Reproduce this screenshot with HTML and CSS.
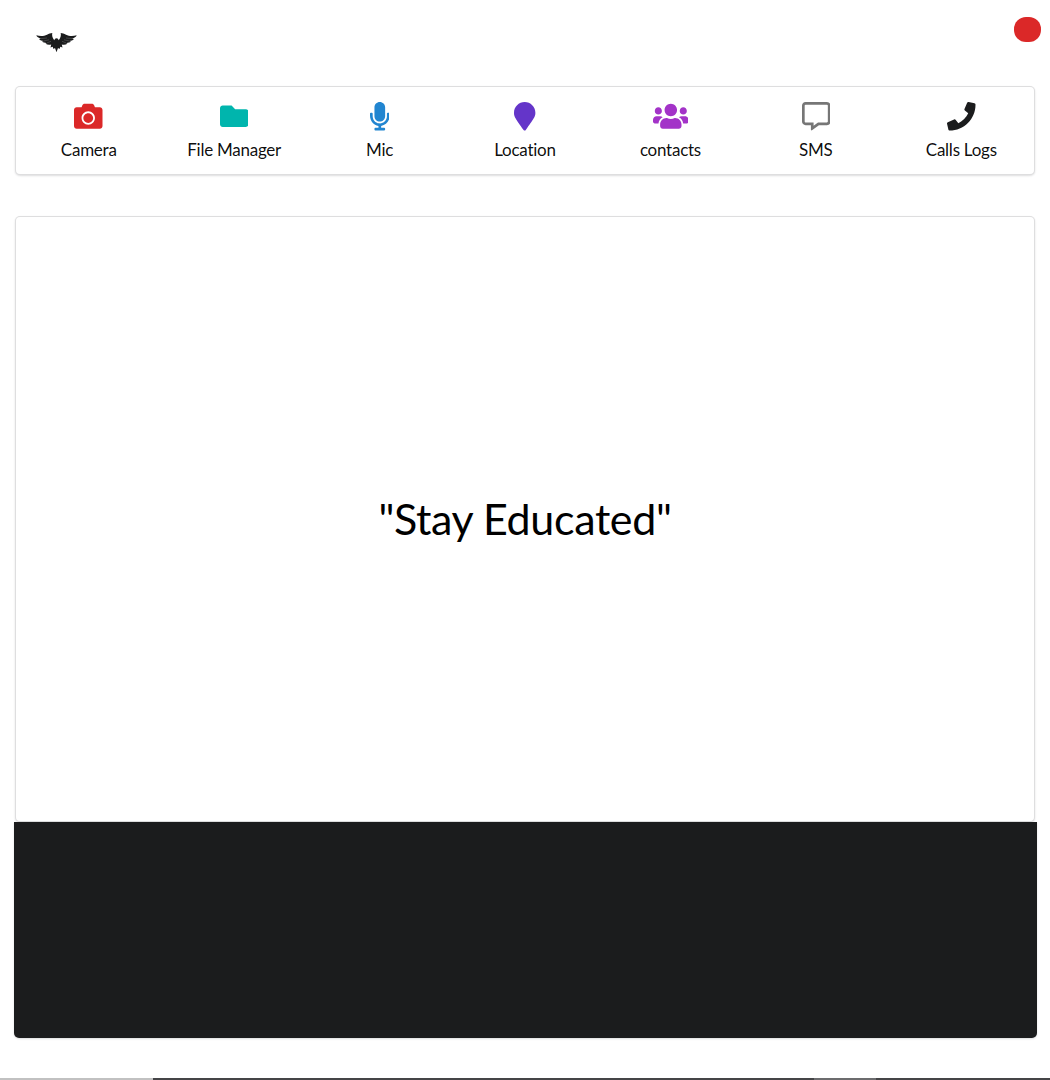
FILE: index.html
```html
<!DOCTYPE html>
<html lang="en">
<head>
<meta charset="utf-8">
<title>Dashboard</title>
<link rel="stylesheet" href="styles.css">
</head>
<body>
<div class="page">
  <header class="header">
    <svg class="logo" viewBox="0 0 41 22" fill="currentColor"><path d="M0.300 4.300C4 5.500 8 5.300 11 3.800C13 2.800 14.500 2.200 16.300 2C15.700 4.500 16.500 7 18.300 9.300L19 7.700L20.500 7.200L22 7.700L22.700 9.300C24.500 7 25.300 4.500 24.700 2C26.500 2.200 28 2.800 30 3.800C33 5.300 37 5.500 40.700 4.300C40 6 38.500 7 36 7.600L38 7.900C37 9.200 35.500 9.800 33 9.900L35 10.500C33.500 11.700 31.800 12 30 11.900L31.500 12.800C29.500 14 27.500 14 25.800 13.500L26.500 16.500L24.300 15.700L23.500 18L22 17L20.500 21.300L19 17L17.500 18L16.700 15.700L14.500 16.500L15.200 13.500C13.500 14 11.500 14 9.500 12.800L11 11.900C9.200 12 7.500 11.700 6 10.500L8 9.900C5.500 9.800 4 9.200 3 7.900L5 7.600C2.500 7 1 6 0.300 4.300Z"/><path class="feathers" d="M5 7.600L11 7M8 9.900L13 8.800M11 11.900L15 10.300M36 7.600L30 7M33 9.900L28 8.800M30 11.900L26 10.300"/></svg>
    <span class="status"></span>
  </header>

  <nav class="segment menu">
    <a class="item"><svg class="icon red" viewBox="0 0 512 512"><path d="M512 144v288c0 26.500-21.500 48-48 48H48c-26.500 0-48-21.500-48-48V144c0-26.500 21.500-48 48-48h88l12.300-32.900c7-18.700 24.900-31.100 44.900-31.100h125.500c20 0 37.900 12.400 44.900 31.100L376 96h88c26.500 0 48 21.500 48 48zM376 288c0-66.200-53.800-120-120-120s-120 53.800-120 120 53.800 120 120 120 120-53.800 120-120zm-32 0c0 48.500-39.500 88-88 88s-88-39.500-88-88 39.500-88 88-88 88 39.500 88 88z"/></svg><span>Camera</span></a>
    <a class="item"><svg class="icon teal" viewBox="0 0 512 512"><path d="M464 128H272l-64-64H48C21.490 64 0 85.490 0 112v288c0 26.510 21.490 48 48 48h416c26.510 0 48-21.490 48-48V176c0-26.510-21.490-48-48-48z"/></svg><span>File Manager</span></a>
    <a class="item"><svg class="icon blue" viewBox="0 0 352 512"><path d="M176 352c53.020 0 96-42.980 96-96V96c0-53.020-42.980-96-96-96S80 42.980 80 96v160c0 53.020 42.980 96 96 96zm160-160h-16c-8.840 0-16 7.160-16 16v48c0 74.800-64.490 134.820-140.790 127.380C96.710 376.890 48 317.110 48 250.300V208c0-8.840-7.160-16-16-16H16c-8.840 0-16 7.160-16 16v40.160c0 89.640 63.970 169.550 152 181.690V464H96c-8.840 0-16 7.160-16 16v16c0 8.840 7.160 16 16 16h160c8.840 0 16-7.160 16-16v-16c0-8.840-7.160-16-16-16h-56v-33.770C285.710 418.470 352 344.900 352 256v-48c0-8.840-7.160-16-16-16z"/></svg><span>Mic</span></a>
    <a class="item"><svg class="icon violet" viewBox="0 0 384 512"><path d="M172.268 501.670C26.970 291.031 0 269.413 0 192 0 85.961 85.961 0 192 0s192 85.961 192 192c0 77.413-26.970 99.031-172.268 309.670-9.535 13.774-29.930 13.773-39.464 0z"/></svg><span>Location</span></a>
    <a class="item"><svg class="icon purple" viewBox="0 0 640 512"><path d="M96 224c35.300 0 64-28.700 64-64s-28.700-64-64-64-64 28.700-64 64 28.700 64 64 64zm448 0c35.300 0 64-28.700 64-64s-28.700-64-64-64-64 28.700-64 64 28.700 64 64 64zm32 32h-64c-17.600 0-33.500 7.100-45.100 18.600 40.300 22.100 68.900 62 75.100 109.400h66c17.700 0 32-14.300 32-32v-32c0-35.300-28.700-64-64-64zm-256 0c61.900 0 112-50.100 112-112S381.900 32 320 32 208 82.100 208 144s50.100 112 112 112zm76.800 32h-8.300c-20.800 10-43.900 16-68.500 16s-47.600-6-68.500-16h-8.300C179.600 288 128 339.600 128 403.200V432c0 26.500 21.500 48 48 48h288c26.500 0 48-21.500 48-48v-28.800c0-63.600-51.600-115.200-115.200-115.200zm-223.700-13.400C161.500 263.100 145.600 256 128 256H64c-35.300 0-64 28.700-64 64v32c0 17.700 14.300 32 32 32h65.900c6.300-47.400 34.900-87.300 75.200-109.400z"/></svg><span>contacts</span></a>
    <a class="item"><svg class="icon grey" viewBox="0 0 512 512"><path d="M448 0H64C28.700 0 0 28.700 0 64v288c0 35.300 28.700 64 64 64h96v84c0 7.100 5.800 12 12 12 2.400 0 4.900-.7 7.100-2.400L304 416h144c35.300 0 64-28.700 64-64V64c0-35.300-28.700-64-64-64zm16 352c0 8.800-7.200 16-16 16H288l-12.800 9.600L208 428v-60H64c-8.800 0-16-7.200-16-16V64c0-8.800 7.200-16 16-16h384c8.800 0 16 7.200 16 16v288z"/></svg><span>SMS</span></a>
    <a class="item"><svg class="icon black" viewBox="0 0 512 512"><path d="M493.400 24.600l-104-24c-11.300-2.600-22.900 3.300-27.500 13.900l-48 112c-4.200 9.800-1.400 21.300 6.900 28l60.600 49.600c-36 76.700-98.900 140.500-177.200 177.200l-49.600-60.600c-6.800-8.300-18.200-11.100-28-6.900l-112 48C3.900 366.500-2 378.100.6 389.400l24 104C27.100 504.200 36.700 512 48 512c256.100 0 464-207.500 464-464 0-11.200-7.700-20.900-18.600-23.400z"/></svg><span>Calls Logs</span></a>
  </nav>

  <main class="segment stage"><h1 class="quote">"Stay Educated"</h1></main>
  <section class="console"></section>
  <footer class="strip"><span class="strip-light"></span><span class="strip-dark"></span><span class="strip-mid"></span><span class="strip-dark"></span></footer>
</div>
</body>
</html>
```
FILE: styles.css
```css
* { box-sizing: border-box; }
body {
  margin: 0;
  background: #fff;
  font-family: Lato, "Liberation Sans", sans-serif;
  color: rgba(0, 0, 0, .95);
}
.page {
  display: flex;
  flex-direction: column;
  height: 1080px;
  overflow: hidden;
}
.header {
  display: flex;
  justify-content: space-between;
  align-items: flex-start;
  height: 86px;
  padding: 17px 9px 0 36px;
}
.logo {
  width: 41px;
  height: 22px;
  margin-top: 14px;
  color: #1b1c1d;
}
.feathers {
  fill: none;
  stroke: #fff;
  stroke-width: .5;
  opacity: .35;
}
.status {
  width: 27px;
  height: 25px;
  border-radius: 12px;
  background: #db2828;
}
.segment {
  margin: 0 15px;
  border: 1px solid rgba(34, 36, 38, .15);
  border-radius: 5px;
  background: #fff;
  box-shadow: 0 1px 2px rgba(34, 36, 38, .15);
}
.menu {
  display: grid;
  grid-template-columns: repeat(7, 1fr);
  height: 89px;
}
.item {
  display: flex;
  flex-direction: column;
  align-items: center;
  padding-top: 15px;
  font-size: 17px;
  line-height: 22px;
  letter-spacing: -.25px;
}
.item span { margin-top: 8.500px; }
.icon {
  height: 28.500px;
  fill: currentColor;
}
.red { color: #db2828; }
.teal { color: #00b5ad; }
.blue { color: #2185d0; }
.violet { color: #6435c9; }
.purple { color: #a333c8; }
.grey { color: #767676; }
.black { color: #1b1c1d; }
.stage {
  display: flex;
  align-items: center;
  justify-content: center;
  height: 606px;
  margin-top: 41px;
}
.quote {
  margin: 0;
  font-size: 43px;
  font-weight: 400;
  line-height: 54px;
  letter-spacing: -.35px;
  color: #000;
}
.console {
  height: 216px;
  margin: 0 13px 0 14px;
  border-radius: 0 0 5px 5px;
  background: #1b1c1d;
  box-shadow: 0 1px 2px rgba(34, 36, 38, .15);
}
.strip {
  display: grid;
  grid-template-columns: 153px 661px 62px 1fr;
  height: 2px;
  margin-top: auto;
}
.strip-light { background: #c1c1c1; }
.strip-dark { background: #454547; }
.strip-mid { background: #6c6c6e; }
```
